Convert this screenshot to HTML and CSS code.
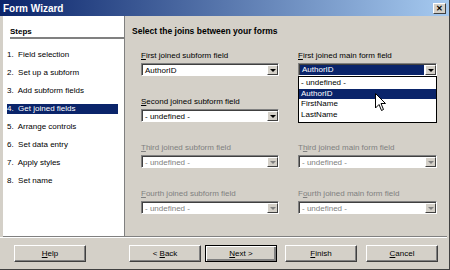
FILE: index.html
```html
<!DOCTYPE html>
<html lang="en">

<head>
    <meta charset="UTF-8">
    <title>Form Wizard</title>
    <link rel="stylesheet" href="styles.css">
</head>

<body>
    <div class="window">
        <div class="titlebar">
            <span class="title">Form Wizard</span>
            <span class="close">&#x2715;</span>
        </div>

        <div class="main">
            <div class="steps">
                <div class="steps-head"><span>Steps</span></div>
                <ul class="step-list">
                    <li>1.&nbsp; Field selection</li>
                    <li>2.&nbsp; Set up a subform</li>
                    <li>3.&nbsp; Add subform fields</li>
                    <li class="active">4.&nbsp; Get joined fields</li>
                    <li>5.&nbsp; Arrange controls</li>
                    <li>6.&nbsp; Set data entry</li>
                    <li>7.&nbsp; Apply styles</li>
                    <li>8.&nbsp; Set name</li>
                </ul>
            </div>

            <div class="content">
                <div class="heading">Select the joins between your forms</div>

                <div class="fields">
                    <div class="field">
                        <label><u>F</u>irst joined subform field</label>
                        <div class="combo">
                            <span class="value">AuthorID</span>
                            <span class="arrow"></span>
                        </div>
                    </div>
                    <div class="field open">
                        <label><u>F</u>irst joined main form field</label>
                        <div class="combo">
                            <span class="value selected">AuthorID</span>
                            <span class="arrow"></span>
                        </div>
                        <ul class="dropdown">
                            <li>- undefined -</li>
                            <li class="hover">AuthorID</li>
                            <li>FirstName</li>
                            <li>LastName</li>
                        </ul>
                        <svg class="cursor" width="12" height="19" viewBox="0 0 12 19">
                            <path d="M0.5 0.5 L0.5 15 L4 11.5 L6.5 17.5 L8.5 16.5 L6 10.5 L10.5 10.5 Z" fill="#fff" stroke="#000" stroke-width="1"/>
                        </svg>
                    </div>

                    <div class="field">
                        <label><u>S</u>econd joined subform field</label>
                        <div class="combo">
                            <span class="value">- undefined -</span>
                            <span class="arrow"></span>
                        </div>
                    </div>
                    <!-- sits under the open list, only its lower edge shows -->
                    <div class="field covered">
                        <label><u>S</u>econd joined main form field</label>
                        <div class="combo">
                            <span class="value">- undefined -</span>
                            <span class="arrow"></span>
                        </div>
                    </div>

                    <div class="field disabled">
                        <label><u>T</u>hird joined subform field</label>
                        <div class="combo">
                            <span class="value">- undefined -</span>
                            <span class="arrow"></span>
                        </div>
                    </div>
                    <div class="field disabled">
                        <label>T<u>h</u>ird joined main form field</label>
                        <div class="combo">
                            <span class="value">- undefined -</span>
                            <span class="arrow"></span>
                        </div>
                    </div>

                    <div class="field disabled">
                        <label><u>F</u>ourth joined subform field</label>
                        <div class="combo">
                            <span class="value">- undefined -</span>
                            <span class="arrow"></span>
                        </div>
                    </div>
                    <div class="field disabled">
                        <label>F<u>o</u>urth joined main form field</label>
                        <div class="combo">
                            <span class="value">- undefined -</span>
                            <span class="arrow"></span>
                        </div>
                    </div>
                </div>
            </div>
        </div>

        <div class="buttons">
            <button class="btn"><u>H</u>elp</button>
            <div class="nav">
                <button class="btn">&lt; <u>B</u>ack</button>
                <button class="btn default"><u>N</u>ext &gt;</button>
                <button class="btn"><u>F</u>inish</button>
                <button class="btn"><u>C</u>ancel</button>
            </div>
        </div>
    </div>
</body>

</html>
```

FILE: styles.css
```css
body {
    margin: 0;
    padding: 0;
    background: #d4d0c8;
    font-family: "Liberation Sans", Arial, sans-serif;
    font-size: 8px;
    color: #000;
}

.window {
    width: 450px;
    height: 270px;
    box-sizing: border-box;
    display: flex;
    flex-direction: column;
    background: #d4d0c8;
    border-right: 1px solid #404040;
    border-bottom: 1px solid #404040;
    overflow: hidden;
}

.titlebar {
    height: 16px;
    flex-shrink: 0;
    display: flex;
    align-items: center;
    justify-content: space-between;
    padding: 0 3px 0 3px;
    background: linear-gradient(90deg, #0a246a, #a6caf0);
    color: #fff;
}

.title {
    font-weight: bold;
    font-size: 10px;
}

.close {
    width: 13px;
    height: 11px;
    box-sizing: border-box;
    display: flex;
    align-items: center;
    justify-content: center;
    background: #d4d0c8;
    color: #000;
    font-size: 8px;
    font-weight: bold;
    border: 1px solid;
    border-color: #fff #404040 #404040 #fff;
}

.main {
    display: flex;
    height: 220px;
    margin: 0 2px 0 3px;
    border-bottom: 1px solid #808080;
}

.steps {
    width: 121px;
    flex-shrink: 0;
    background: #fff;
    border-right: 1px solid #808080;
}

.steps-head {
    margin: 11px 0 0 7px;
    padding-bottom: 1px;
    border-bottom: 2px solid #808080;
    font-weight: bold;
    line-height: 9px;
}

.step-list {
    list-style: none;
    margin: 11px 0 0 0;
    padding: 0;
}

.step-list li {
    height: 10px;
    line-height: 10px;
    margin: 0 6px 8px 4px;
    color: #000;
}

.step-list li.active {
    background: #0a246a;
    color: #fff;
}

.content {
    flex: 1;
    padding: 11px 0 0 7px;
}

.heading {
    font-weight: bold;
    font-size: 8.5px;
    line-height: 9px;
}

.fields {
    display: grid;
    grid-template-columns: 138px 139px;
    column-gap: 19px;
    row-gap: 21px;
    margin: 15px 0 0 9px;
}

.field {
    position: relative;
}

.field label {
    display: block;
    height: 12px;
    line-height: 10px;
    white-space: nowrap;
}

.combo {
    display: flex;
    height: 13px;
    box-sizing: border-box;
    background: #fff;
    border: 1px solid;
    border-color: #808080 #fff #fff #808080;
    box-shadow: inset 1px 1px 0 #404040;
}

.combo .value {
    flex: 1;
    line-height: 11px;
    padding-left: 2px;
    margin: 1px 0 0 1px;
    white-space: nowrap;
    overflow: hidden;
}

.combo .value.selected {
    background: #0a246a;
    color: #fff;
    margin-right: 1px;
    line-height: 10px;
}

.arrow {
    width: 11px;
    margin: 1px 0 0 0;
    box-sizing: border-box;
    background: #d4d0c8;
    border: 1px solid;
    border-color: #fff #404040 #404040 #fff;
    position: relative;
}

.arrow::after {
    content: "";
    position: absolute;
    left: 2px;
    top: 3px;
    border-left: 3px solid transparent;
    border-right: 3px solid transparent;
    border-top: 3px solid #000;
}

.covered label,
.covered .value {
    visibility: hidden;
}

.disabled label {
    color: #808080;
}

.disabled .value {
    color: #808080;
}

.disabled .arrow::after {
    border-top-color: #808080;
}

.open {
    z-index: 2;
}

.dropdown {
    position: absolute;
    left: 0;
    right: 0;
    top: 25px;
    margin: 0;
    padding: 1px 0 2px 0;
    list-style: none;
    background: #fff;
    border: 1px solid #000;
}

.dropdown li {
    height: 10.5px;
    line-height: 10px;
    padding-left: 2px;
}

.dropdown li.hover {
    background: #0a246a;
    color: #fff;
}

.cursor {
    position: absolute;
    left: 77px;
    top: 42px;
}

.buttons {
    display: flex;
    justify-content: space-between;
    padding: 7px 9px 0 14px;
    border-top: 1px solid #fff;
    margin: 0 2px 0 0;
}

.nav {
    display: flex;
    gap: 4px;
}

.nav .btn:nth-child(3) {
    margin-left: 4px;
}

.nav .btn:nth-child(4) {
    margin-left: 5px;
}

.btn {
    width: 72px;
    height: 17px;
    padding: 0;
    font-family: "Liberation Sans", Arial, sans-serif;
    font-size: 8px;
    color: #000;
    background: #d4d0c8;
    border: 1px solid;
    border-color: #fff #404040 #404040 #fff;
    box-shadow: inset -1px -1px 0 #808080;
}

.btn.default {
    border: 1px solid #000;
    box-shadow: inset 1px 1px 0 #fff, inset -2px -2px 0 #808080;
}
```
